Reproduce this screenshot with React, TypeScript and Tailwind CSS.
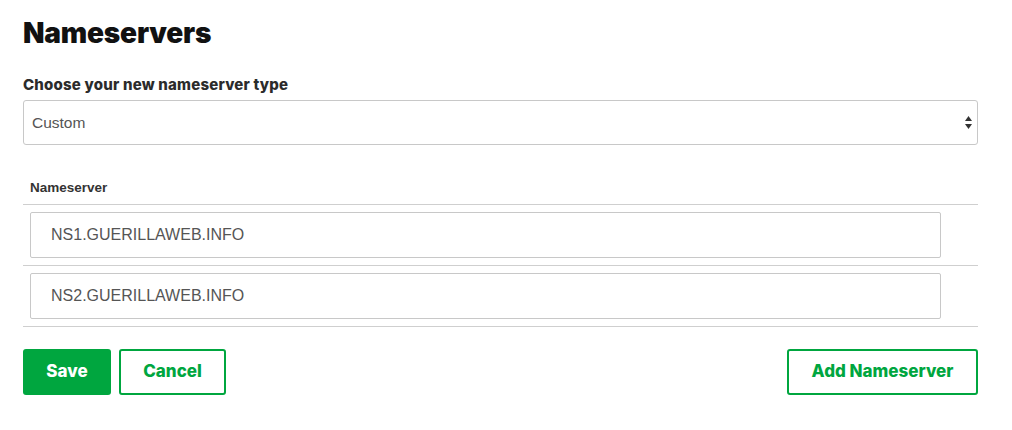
export default function App() {
  const servers = ["NS1.GUERILLAWEB.INFO", "NS2.GUERILLAWEB.INFO"];

  return (
    <div className="min-h-[430px] w-[1012px] bg-white">
      <div className="ml-[23px] w-[955px] pt-[15px]">
        <h1 className="font-['Inter',sans-serif] text-[28px] leading-[36px] font-black tracking-[-0.2px] text-[#111]">
          Nameservers
        </h1>

        <label className="mt-[24px] block font-['Inter',sans-serif] text-[15px] leading-[20px] font-extrabold tracking-[0.2px] text-[#2b2b2b]">
          Choose your new nameserver type
        </label>
        <div className="mt-[5px] flex h-[45px] items-center justify-between rounded-[3px] border border-[#c8c8c8] pr-[4px] pl-[8px] font-['Liberation_Sans',sans-serif] text-[15.5px] text-[#555]">
          <span>Custom</span>
          <svg width="9" height="15" viewBox="0 0 9 15">
            <path d="M4.5 1 L8 6 L1 6 Z" fill="#333" />
            <path d="M4.5 14 L8 9 L1 9 Z" fill="#333" />
          </svg>
        </div>

        <div className="border-b border-[#cfcfcf] pt-[35px] pb-[8px] pl-[7px] font-['Liberation_Sans',sans-serif] text-[13.5px] leading-[16px] font-bold text-[#333]">
          Nameserver
        </div>
        {servers.map((ns) => (
          <div key={ns} className="border-b border-[#cfcfcf] pt-[7px] pr-[37px] pb-[7px] pl-[7px]">
            <input
              defaultValue={ns}
              className="block h-[46px] w-full rounded-[2px] border border-[#c8c8c8] pl-[20px] font-['Liberation_Sans',sans-serif] text-[16px] text-[#555] outline-none"
            />
          </div>
        ))}

        <div className="mt-[22px] flex items-center justify-between font-['Inter',sans-serif] text-[17px] font-extrabold">
          <div className="flex gap-[8px]">
            <button className="h-[46px] w-[88px] rounded-[3px] bg-[#00a63f] text-white">Save</button>
            <button className="h-[46px] w-[107px] rounded-[3px] border-2 border-[#00a63f] text-[#00a63f]">
              Cancel
            </button>
          </div>
          <button className="h-[46px] w-[191px] rounded-[3px] border-2 border-[#00a63f] text-[#00a63f]">
            Add Nameserver
          </button>
        </div>
      </div>
    </div>
  );
}
